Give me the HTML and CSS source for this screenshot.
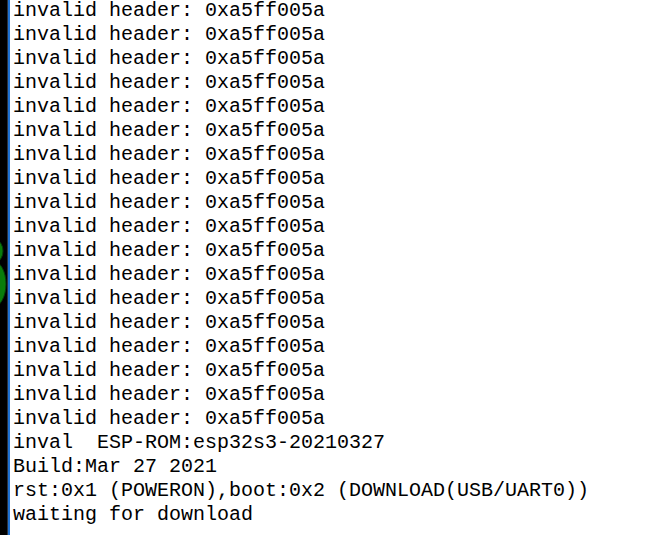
FILE: index.html
```html
<!DOCTYPE html>
<html>
<head>
<meta charset="utf-8">
<link rel="stylesheet" href="styles.css">
</head>
<body>
<div class="window">
  <div class="edge">
    <svg class="blob" width="7" height="535" viewBox="0 0 7 535">
      <ellipse cx="-3" cy="251" rx="6" ry="10" fill="#0a7d0a" stroke="#063d06" stroke-width="1"/>
      <ellipse cx="-7" cy="284" rx="13" ry="23" fill="#0a7d0a" stroke="#063d06" stroke-width="1"/>
    </svg>
  </div>
  <div class="sep"></div>
  <div class="accent"></div>
  <pre class="console">invalid header: 0xa5ff005a
invalid header: 0xa5ff005a
invalid header: 0xa5ff005a
invalid header: 0xa5ff005a
invalid header: 0xa5ff005a
invalid header: 0xa5ff005a
invalid header: 0xa5ff005a
invalid header: 0xa5ff005a
invalid header: 0xa5ff005a
invalid header: 0xa5ff005a
invalid header: 0xa5ff005a
invalid header: 0xa5ff005a
invalid header: 0xa5ff005a
invalid header: 0xa5ff005a
invalid header: 0xa5ff005a
invalid header: 0xa5ff005a
invalid header: 0xa5ff005a
invalid header: 0xa5ff005a
inval  ESP-ROM:esp32s3-20210327
Build:Mar 27 2021
rst:0x1 (POWERON),boot:0x2 (DOWNLOAD(USB/UART0))
waiting for download</pre>
</div>
</body>
</html>
```
FILE: styles.css
```css
html, body {
  margin: 0;
  padding: 0;
  background: #ffffff;
  overflow: hidden;
}
.window {
  display: flex;
  width: 648px;
  height: 535px;
  overflow: hidden;
  background: #ffffff;
}
.edge {
  width: 7px;
  flex: none;
  background: #000000;
  position: relative;
}
.blob {
  display: block;
}
.sep {
  width: 1px;
  flex: none;
  background: #2b3440;
}
.accent {
  width: 2px;
  flex: none;
  background: #1f72d3;
}
.console {
  margin: -1px 0 0 0;
  padding: 0 0 0 3px;
  font-family: "Liberation Mono", "DejaVu Sans Mono", monospace;
  font-size: 20px;
  line-height: 24px;
  color: #000000;
  white-space: pre;
}
```
